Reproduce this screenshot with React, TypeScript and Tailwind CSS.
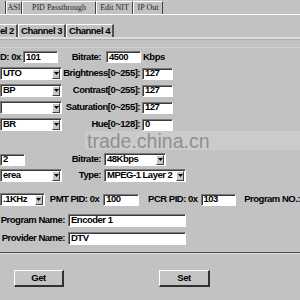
import React from "react"

const sunken =
  "bg-white border-t border-l border-[#7a7a7a] border-b border-r border-b-white border-r-white shadow-[inset_1px_1px_0_#3a3a3a]"

const Field = ({ value, className = "" }: { value: string; className?: string }) => (
  <div className={`h-[12px] flex items-center pl-[2px] overflow-hidden whitespace-nowrap ${sunken} ${className}`}>
    {value}
  </div>
)

const Select = ({ value, className = "" }: { value: string; className?: string }) => (
  <div className={`h-[13px] flex items-center overflow-hidden whitespace-nowrap ${sunken} ${className}`}>
    <span className="flex-1 pl-[2px]">{value}</span>
    <span className="w-[8px] h-[10px] mr-[1px] bg-[#c6c6c6] border border-t-white border-l-white border-b-[#404040] border-r-[#404040] flex items-center justify-center">
      <svg width="5" height="3" viewBox="0 0 5 3">
        <path d="M0 0h5L2.5 3z" fill="#000" />
      </svg>
    </span>
  </div>
)

const Label = ({ text, className = "" }: { text: string; className?: string }) => (
  <span className={`whitespace-nowrap ${className}`}>{text}</span>
)

const TopTab = ({ text, className = "" }: { text: string; className?: string }) => (
  <div
    className={`h-[13px] flex items-center justify-center border-t border-l border-white border-r border-r-[#404040] text-[8px] font-['Liberation_Serif',serif] text-[#1e1e1e] whitespace-nowrap ${className}`}
  >
    {text}
  </div>
)

const ChannelTab = ({ text, className = "" }: { text: string; className?: string }) => (
  <div
    className={`h-[13px] flex items-center justify-center border-t border-l border-white border-r-2 border-r-[#505050] whitespace-nowrap ${className}`}
  >
    {text}
  </div>
)

const Button = ({ text, className = "" }: { text: string; className?: string }) => (
  <div
    className={`h-[17px] flex items-center justify-center bg-[#c4c4c4] border-t border-l border-white border-b-2 border-r-2 border-b-[#303030] border-r-[#303030] ${className}`}
  >
    {text}
  </div>
)

export default function App() {
  return (
    <div className="relative w-[300px] h-[300px] overflow-hidden bg-[#c2c2c2] text-black font-['Liberation_Sans',Arial,sans-serif] text-[9.5px] font-bold tracking-[-0.5px]">
      {/* top tab strip */}
      <div className="flex items-end h-[14px] tracking-normal font-normal">
        <div className="w-[6px] h-[13px] border-r border-[#404040]" />
        <TopTab text="ASI" className="w-[16px]" />
        <TopTab text="PID Passthrough" className="w-[74px]" />
        <TopTab text="Edit NIT" className="w-[37px]" />
        <TopTab text="IP Out" className="w-[30px]" />
      </div>
      <div className="h-[1px] bg-white" />

      {/* channel tabs */}
      <div className="flex mt-[9px]">
        <ChannelTab text="el 2" className="w-[18px] border-l-0 justify-start" />
        <ChannelTab text="Channel 3" className="w-[48px]" />
        <ChannelTab text="Channel 4" className="w-[48px]" />
      </div>
      <div className="h-[2px] bg-[#dedede]" />
      <div className="h-[1px] bg-[#ababab]" />
      <div className="h-[1px] mt-[7px] bg-[#d2d2d2]" />

      {/* form */}
      <div className="flex flex-col">
        <div className="flex items-center h-[12px] mt-[3px]">
          <Label text="D: 0x" className="w-[21px]" />
          <Field value="101" className="ml-[2px] w-[35px]" />
          <Label text="Bitrate:" className="w-[43px] text-right" />
          <Field value="4500" className="ml-[5px] w-[35px]" />
          <Label text="Kbps" className="ml-[2px]" />
        </div>

        {[
          ["UTO", "Brightness[0~255]:", "127"],
          ["BP", "Contrast[0~255]:", "127"],
          ["", "Saturation[0~255]:", "127"],
          ["BR", "Hue[0~128]:", "0"],
        ].map(([sel, label, val]) => (
          <div key={label} className="flex items-center h-[13px] mt-[4px]">
            <Select value={sel} className="w-[62px]" />
            <Label text={label} className="w-[78px] text-right" />
            <Field value={val} className="ml-[2px] w-[31px]" />
          </div>
        ))}

        <div className="flex items-center h-[13px] mt-[22px]">
          <Field value="2" className="w-[25px]" />
          <Label text="Bitrate:" className="w-[76px] text-right" />
          <Select value="48Kbps" className="ml-[3px] w-[62px]" />
        </div>

        <div className="flex items-center h-[13px] mt-[3px]">
          <Select value="erea" className="w-[62px]" />
          <Label text="Type:" className="w-[39px] text-right" />
          <Select value="MPEG-1 Layer 2" className="ml-[3px] w-[82px]" />
        </div>

        <div className="flex items-center h-[13px] mt-[11px]">
          <Select value=".1KHz" className="w-[45px]" />
          <Label text="PMT PID: 0x" className="w-[55px] text-right" />
          <Field value="100" className="ml-[4px] w-[36px]" />
          <Label text="PCR PID: 0x" className="w-[59px] text-right" />
          <Field value="103" className="ml-[3px] w-[36px]" />
          <Label text="Program NO.:" className="ml-[8px]" />
        </div>

        <div className="flex items-center h-[13px] mt-[8px]">
          <Label text="Program Name:" className="w-[65px] text-right" />
          <Field value="Encoder 1" className="ml-[3px] w-[118px] h-[13px]" />
        </div>
        <div className="flex items-center h-[13px] mt-[5px]">
          <Label text="Provider Name:" className="w-[65px] text-right" />
          <Field value="DTV" className="ml-[3px] w-[118px] h-[13px]" />
        </div>

        <div className="h-[1px] mt-[7px] bg-[#4a4a4a]" />
        <div className="h-[1px] bg-[#e2e2e2]" />

        <div className="flex mt-[16px]">
          <Button text="Get" className="ml-[14px] w-[50px]" />
          <Button text="Set" className="ml-[95px] w-[51px]" />
        </div>
      </div>

      {/* watermark overlay */}
      <div className="absolute left-[85px] top-[131px] w-[215px] h-[19px] bg-white/15" />
      <div className="absolute left-[87px] top-[127px] text-[19.5px] font-normal tracking-normal text-[#7f7f7f]/80">
        trade.china.cn
      </div>
    </div>
  )
}
